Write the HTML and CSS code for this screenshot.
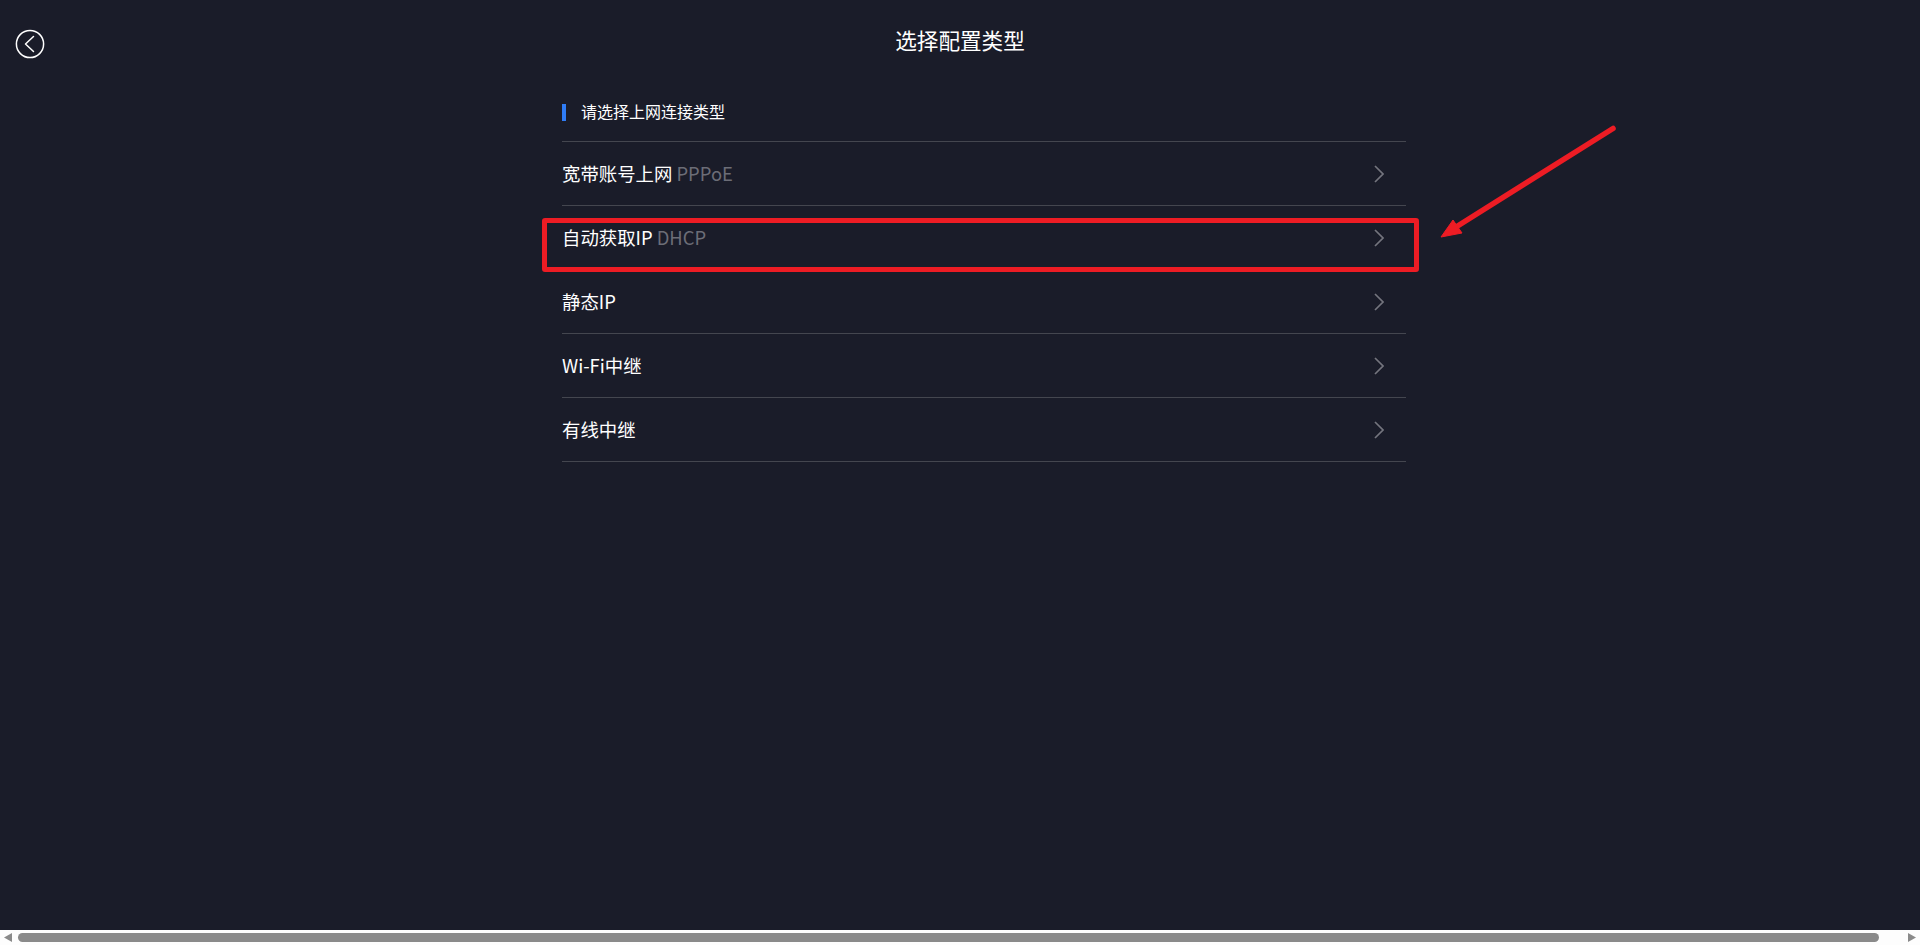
FILE: index.html
```html
<!DOCTYPE html>
<html lang="zh-CN">
<head>
<meta charset="utf-8">
<title>选择配置类型</title>
<link rel="stylesheet" href="styles.css">
</head>
<body>
<div class="app">
  <main class="page">
    <header class="top">
      <button class="back" aria-label="返回">
        <svg width="30" height="30" viewBox="0 0 30 30" fill="none" stroke="#fff" stroke-width="1.5"><circle cx="15" cy="15" r="13.6"/><path d="M18.500 7.500 10.500 15l8 7.500" stroke-linecap="round" stroke-linejoin="round"/></svg>
      </button>
      <h1 class="title">选择配置类型</h1>
    </header>
    <section class="panel">
      <h2 class="sub">请选择上网连接类型</h2>
      <ul class="list">
        <li class="row"><span>宽带账号上网 <em>PPPoE</em></span><svg class="chev" width="10" height="18" viewBox="0 0 10 18" fill="none"><path d="M1 1l8 8-8 8"/></svg></li>
        <li class="row"><span>自动获取IP <em>DHCP</em></span><svg class="chev" width="10" height="18" viewBox="0 0 10 18" fill="none"><path d="M1 1l8 8-8 8"/></svg></li>
        <li class="row"><span>静态IP</span><svg class="chev" width="10" height="18" viewBox="0 0 10 18" fill="none"><path d="M1 1l8 8-8 8"/></svg></li>
        <li class="row"><span>Wi-Fi中继</span><svg class="chev" width="10" height="18" viewBox="0 0 10 18" fill="none"><path d="M1 1l8 8-8 8"/></svg></li>
        <li class="row"><span>有线中继</span><svg class="chev" width="10" height="18" viewBox="0 0 10 18" fill="none"><path d="M1 1l8 8-8 8"/></svg></li>
      </ul>
    </section>
    <div class="mark-box"></div>
    <svg class="mark-arrow" width="200" height="130" viewBox="1430 115 200 130"><path d="M1613 128.500 1456 227" fill="none" stroke="#ed1c24" stroke-width="5.500" stroke-linecap="round"/><path d="M1441 237 1453 220 1462 233z" fill="#ed1c24" stroke="#ed1c24" stroke-width="1"/></svg>
  </main>
  <div class="hbar">
    <svg class="arr" width="18" height="15" viewBox="0 0 18 15"><path d="M12 3v9L4 7.500z" fill="#8a8a8a"/></svg>
    <div class="thumb"></div>
    <svg class="arr" width="18" height="15" viewBox="0 0 18 15"><path d="M6 3v9l8-4.500z" fill="#8a8a8a"/></svg>
  </div>
</div>
</body>
</html>
```
FILE: styles.css
```css
* { box-sizing: border-box; }
html, body { margin: 0; height: 100%; overflow: hidden; }
body { font-family: "Noto Sans CJK SC", "Noto Sans", sans-serif; color: #fff; background: #1a1c29; }
.app { height: 945px; display: flex; flex-direction: column; }
.page { flex: 1; position: relative; min-height: 0; }
.top { height: 84px; display: flex; align-items: flex-start; justify-content: center; position: relative; }
.title { margin: 23px 0 0; font-size: 21.6px; line-height: 33px; font-weight: 400; }
.back { position: absolute; left: 15px; top: 29px; width: 30px; height: 30px; padding: 0; background: none; border: 0; }
.back svg { display: block; }
.panel { width: 844px; margin-left: 562px; }
.sub { margin: 0; height: 58px; padding: 20px 0 0 19px; font-size: 16px; line-height: 15px; font-weight: 400; position: relative; border-bottom: 1px solid #44464f; }
.sub::before { content: ""; position: absolute; left: 0; top: 20px; width: 4px; height: 17px; background: #2f7cf6; }
.list { list-style: none; margin: 0; padding: 0; }
.row { height: 64px; display: flex; align-items: center; justify-content: space-between; padding: 0 22px 0 0; font-size: 18.4px; border-bottom: 1px solid #44464f; }
.row span { position: relative; top: -1px; }
.row em { font-style: normal; color: #6c6d77; }
.chev { stroke: #74757e; stroke-width: 1.700; display: block; }
.mark-box { position: absolute; left: 542px; top: 218px; width: 877px; height: 54px; border: 5px solid #ed1c24; border-radius: 3px; }
.mark-arrow { position: absolute; left: 1430px; top: 115px; }
.hbar { height: 15px; background: #fdfdfd; display: flex; align-items: center; flex: none; }
.arr { flex: none; }
.thumb { flex: 1; height: 9px; margin: 0 23px 0 0; background: #8a8a8a; border-radius: 5px; }
```
